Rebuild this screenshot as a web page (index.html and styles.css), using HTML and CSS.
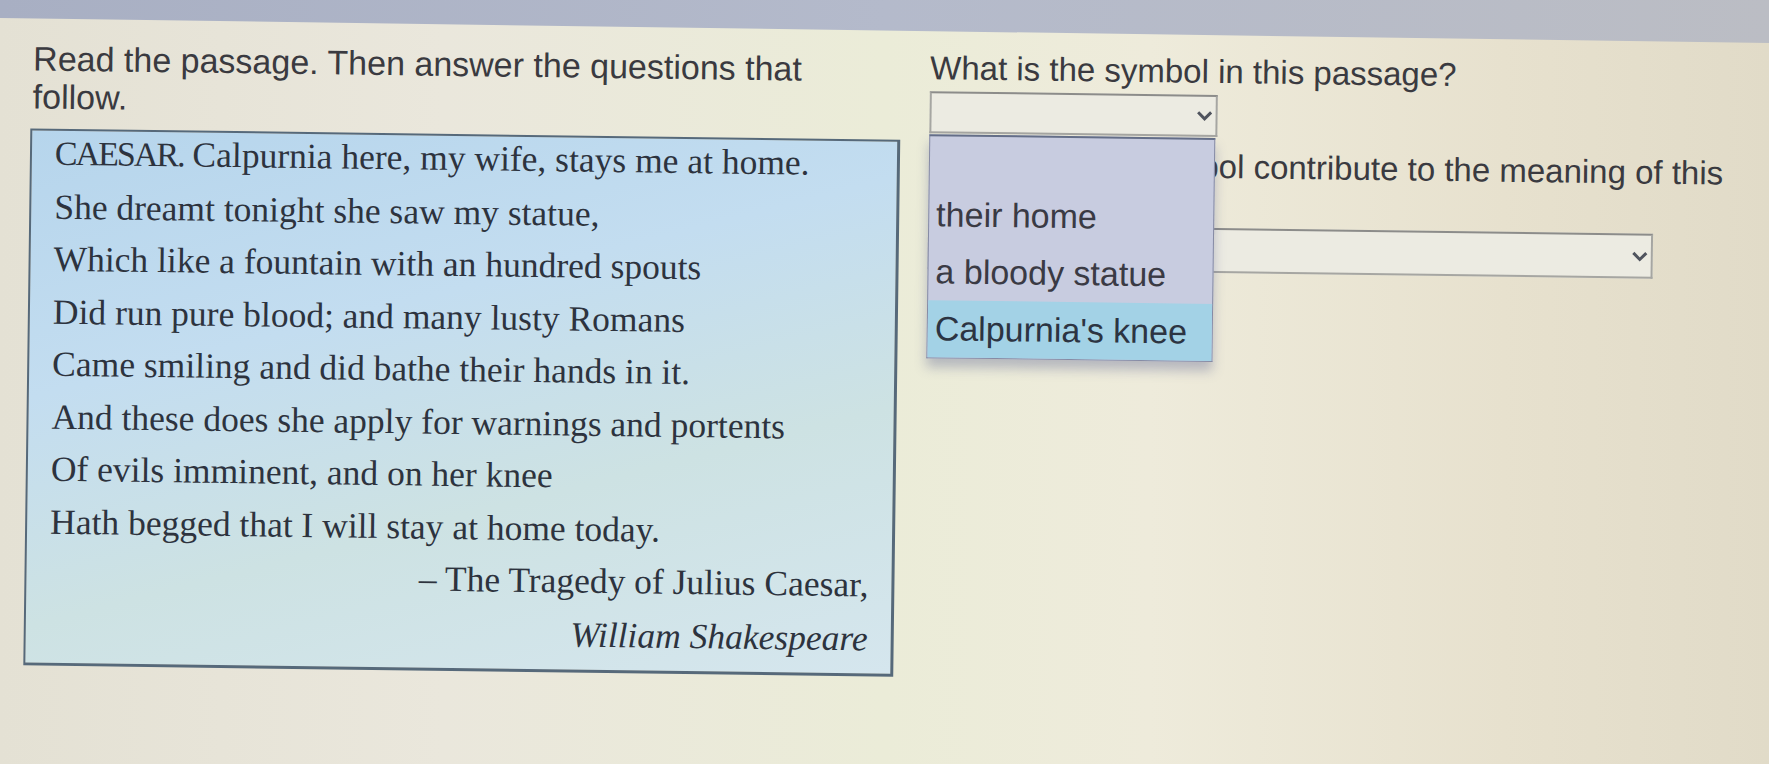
FILE: index.html
```html
<!DOCTYPE html>
<html>
<head>
<meta charset="utf-8">
<link rel="stylesheet" href="styles.css">
</head>
<body>
<div class="topbar"></div>
<div class="stage">
  <div class="page">
    <div class="left">
      <p class="intro">Read the passage. Then answer the questions that follow.</p>
      <div class="passage">
        <p><span class="speaker">CAESAR.</span> Calpurnia here, my wife, stays me at home.</p>
        <p>She dreamt tonight she saw my statue,</p>
        <p>Which like a fountain with an hundred spouts</p>
        <p>Did run pure blood; and many lusty Romans</p>
        <p>Came smiling and did bathe their hands in it.</p>
        <p>And these does she apply for warnings and portents</p>
        <p>Of evils imminent, and on her knee</p>
        <p>Hath begged that I will stay at home today.</p>
        <p class="src">– The Tragedy of Julius Caesar,</p>
        <p class="src author">William Shakespeare</p>
      </div>
    </div>
    <div class="right">
      <p class="q">What is the symbol in this passage?</p>
      <div class="selwrap">
        <div class="select small">
          <svg class="chev" width="18" height="12" viewBox="0 0 18 12"><path d="M2.5 2.5 L9 9 L15.5 2.5" fill="none" stroke="#50545e" stroke-width="3"/></svg>
        </div>
        <ul class="menu">
          <li class="blank"></li>
          <li>their home</li>
          <li>a bloody statue</li>
          <li class="hl">Calpurnia's knee</li>
        </ul>
      </div>
      <p class="q q2">How does the symbol contribute to the meaning of this passage?</p>
      <div class="select wide">
        <svg class="chev" width="18" height="12" viewBox="0 0 18 12"><path d="M2.5 2.5 L9 9 L15.5 2.5" fill="none" stroke="#50545e" stroke-width="3"/></svg>
      </div>
    </div>
  </div>
</div>
</body>
</html>
```
FILE: styles.css
```css
html, body {
  margin: 0;
  padding: 0;
}
body {
  width: 1769px;
  height: 764px;
  overflow: hidden;
  background: linear-gradient(90deg, #e4e1d4 0%, #eae7dc 25%, #ebecd8 50%, #eeebdb 65%, #e7e1ce 85%, #e1dbc8 100%);
  font-family: "Liberation Sans", Arial, sans-serif;
  color: #3a3a40;
}
.topbar {
  height: 43px;
  margin-bottom: -43px;
  background: linear-gradient(90deg, #a8afc3 0%, #b4bacb 50%, #bbbdc4 100%);
  clip-path: polygon(0 0, 100% 0, 100% 43px, 0 18px);
}
.stage {
  transform: rotate(0.75deg);
  transform-origin: 0 0;
}
.page {
  display: flex;
  align-items: flex-start;
  padding-top: 19px;
}
.left {
  width: 870px;
  margin-left: 32px;
  flex: none;
}
.intro {
  margin: 20px 0 0 2px;
  width: 800px;
  font-size: 34px;
  line-height: 38px;
}
.passage {
  margin-top: 13px;
  height: 537px;
  box-sizing: border-box;
  border: 2px solid #56697a;
  border-bottom-width: 3px;
  border-right-width: 3px;
  background: linear-gradient(165deg, #b6d5ec 0%, #c3ddf0 35%, #cde2e3 65%, #d5e6ee 100%);
  padding: 0 23px 0 23px;
  font-family: "Liberation Serif", "Times New Roman", serif;
  color: #2d333e;
}
.passage p {
  margin: 0;
  font-size: 35.5px;
  line-height: 52.5px;
}
.passage p:first-child {
  margin-top: -4px;
}
.speaker {
  font-size: 34px;
  letter-spacing: -2px;
}
.passage .src {
  text-align: right;
}
.passage .author {
  font-style: italic;
  margin-top: 1px;
}
.right {
  margin-left: 29px;
  width: 800px;
  flex: none;
}
.q {
  margin: 18px 0 0 0;
  font-size: 33px;
  line-height: 38px;
}
.selwrap {
  position: relative;
  margin-top: 4px;
}
.select {
  position: relative;
  box-sizing: border-box;
  height: 42px;
  border: 2px solid #a6a6a2;
  border-top-color: #8c8c8a;
  background: #ecebe2;
}
.select.small {
  width: 288px;
}
.select.wide {
  width: 725px;
  height: 45px;
  margin-top: 4px;
}
.chev {
  position: absolute;
  right: 2px;
  top: 50%;
  margin-top: -6px;
}
.menu {
  position: absolute;
  left: 0;
  top: 43px;
  width: 286px;
  box-sizing: border-box;
  margin: 0;
  padding: 0;
  list-style: none;
  background: #c8cce0;
  border: 1px solid #868ba4;
  border-top: 2px solid #646e88;
  box-shadow: 0 9px 12px rgba(80, 90, 140, 0.35);
  z-index: 2;
}
.menu li {
  height: 57px;
  line-height: 57px;
  padding-left: 7px;
  font-size: 34px;
  color: #3a3a44;
}
.menu li.blank {
  height: 50px;
}
.menu li.hl {
  background: #a3d2e6;
  color: #2c3442;
}
.q2 {
  margin-top: 11px;
}
```
